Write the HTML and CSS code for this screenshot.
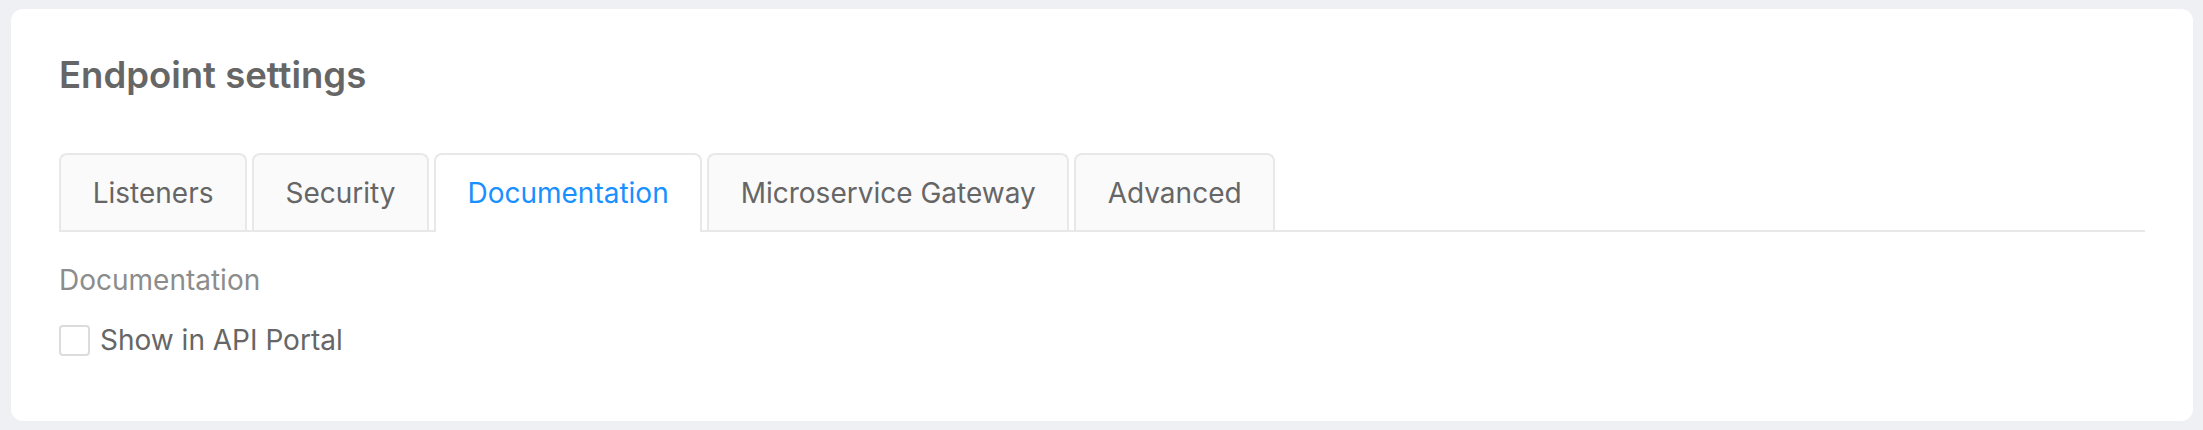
FILE: index.html
```html
<!DOCTYPE html>
<html lang="en">
<head>
<meta charset="utf-8">
<title>Endpoint settings</title>
<link rel="stylesheet" href="styles.css">
</head>
<body>
  <section class="card">
    <h1 class="card-title">Endpoint settings</h1>
    <div class="tabs">
      <div class="tab">Listeners</div>
      <div class="tab">Security</div>
      <div class="tab tab-active">Documentation</div>
      <div class="tab">Microservice Gateway</div>
      <div class="tab">Advanced</div>
    </div>
    <div class="section-label">Documentation</div>
    <label class="check-row">
      <span class="check-box"></span>
      <span class="check-text">Show in API Portal</span>
    </label>
  </section>
</body>
</html>
```

FILE: styles.css
```css
html, body {
  margin: 0;
  background: #eff0f3;
}

body {
  padding: 9px 10px 9px 11px;
  font-family: Inter, "Noto Sans", "Liberation Sans", sans-serif;
}

.card {
  background: #ffffff;
  border-radius: 12px;
  padding: 44px 48px 61px 48px;
}

.card-title {
  margin: 0;
  font-size: 36.5px;
  line-height: 44px;
  font-weight: 600;
  color: #666666;
}

.tabs {
  margin-top: 56px;
  display: flex;
  align-items: flex-end;
  gap: 4.6px;
  border-bottom: 2px solid #e8e8e8;
}

.tab {
  padding: 18px 31.7px 17px 31.7px;
  font-size: 28px;
  line-height: 40px;
  color: #666666;
  background: #fafafa;
  border: 2px solid #e8e8e8;
  border-bottom: none;
  border-radius: 8px 8px 0 0;
  white-space: nowrap;
}

.tab-active {
  background: #ffffff;
  color: #1890ff;
  margin-bottom: -2px;
  padding-bottom: 19px;
}

.section-label {
  margin-top: 28px;
  font-size: 28px;
  line-height: 40px;
  color: #8c8c8c;
}

.check-row {
  margin-top: 20px;
  display: flex;
  align-items: center;
  gap: 10px;
}

.check-box {
  width: 31px;
  height: 31px;
  box-sizing: border-box;
  border: 2px solid #dcdcdc;
  border-radius: 4px;
  background: #ffffff;
}

.check-text {
  font-size: 28px;
  line-height: 40px;
  color: #666666;
}
```
